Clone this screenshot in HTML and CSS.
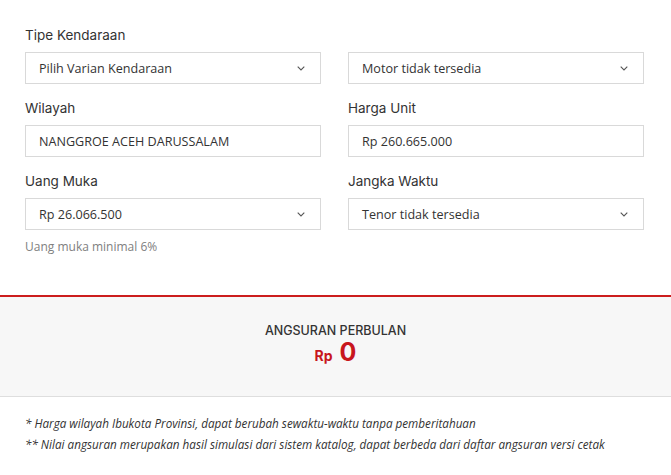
FILE: index.html
```html
<!DOCTYPE html>
<html lang="id">
<head>
<meta charset="utf-8">
<title>Simulasi Kredit</title>
<link rel="stylesheet" href="styles.css">
</head>
<body>
<div class="page">
  <form class="form">
    <div class="field">
      <div class="label">Tipe Kendaraan</div>
      <div class="select"><span>Pilih Varian Kendaraan</span><svg class="chev" width="8" height="5" viewBox="0 0 8 5"><path d="M0.7 0.7 L4 3.9 L7.3 0.7" fill="none" stroke="#555" stroke-width="1.1"/></svg></div>
    </div>
    <div class="field">
      <div class="label">&nbsp;</div>
      <div class="select"><span>Motor tidak tersedia</span><svg class="chev" width="8" height="5" viewBox="0 0 8 5"><path d="M0.7 0.7 L4 3.9 L7.3 0.7" fill="none" stroke="#555" stroke-width="1.1"/></svg></div>
    </div>
    <div class="field">
      <div class="label">Wilayah</div>
      <div class="select"><span>NANGGROE ACEH DARUSSALAM</span></div>
    </div>
    <div class="field">
      <div class="label">Harga Unit</div>
      <div class="select"><span>Rp 260.665.000</span></div>
    </div>
    <div class="field">
      <div class="label">Uang Muka</div>
      <div class="select"><span>Rp 26.066.500</span><svg class="chev" width="8" height="5" viewBox="0 0 8 5"><path d="M0.7 0.7 L4 3.9 L7.3 0.7" fill="none" stroke="#555" stroke-width="1.1"/></svg></div>
      <div class="hint">Uang muka minimal 6%</div>
    </div>
    <div class="field">
      <div class="label">Jangka Waktu</div>
      <div class="select"><span>Tenor tidak tersedia</span><svg class="chev" width="8" height="5" viewBox="0 0 8 5"><path d="M0.7 0.7 L4 3.9 L7.3 0.7" fill="none" stroke="#555" stroke-width="1.1"/></svg></div>
    </div>
  </form>
  <section class="result">
    <div class="result-title">ANGSURAN PERBULAN</div>
    <div class="result-value"><span class="cur">Rp</span><span class="num">0</span></div>
  </section>
  <div class="notes">
    <p>* Harga wilayah Ibukota Provinsi, dapat berubah sewaktu-waktu tanpa pemberitahuan</p>
    <p>** Nilai angsuran merupakan hasil simulasi dari sistem katalog, dapat berbeda dari daftar angsuran versi cetak</p>
  </div>
</div>
</body>
</html>
```
FILE: styles.css
```css
html, body {
  margin: 0;
  padding: 0;
  background: #fff;
}
.page {
  width: 671px;
  font-family: "Open Sans", "Liberation Sans", sans-serif;
  color: #333;
}
.form {
  display: grid;
  grid-template-columns: 296px 296px;
  column-gap: 27px;
  row-gap: 16px;
  padding: 27px 0 0 25px;
  height: 295px;
  box-sizing: border-box;
  align-items: start;
  align-content: start;
}
.field {
  display: flex;
  flex-direction: column;
}
.label {
  font-family: "Inter", "Liberation Sans", sans-serif;
  font-size: 13.5px;
  line-height: 17px;
  height: 17px;
  margin-bottom: 8px;
  color: #333;
}
.select {
  height: 32px;
  box-sizing: border-box;
  border: 1px solid #d9d9d9;
  display: flex;
  align-items: center;
  justify-content: space-between;
  padding: 0 15px 0 13px;
  font-size: 12.6px;
  color: #333;
}
.chev {
  display: block;
}
.hint {
  margin-top: 9px;
  font-size: 12px;
  line-height: 16px;
  color: #808080;
}
.result {
  border-top: 2px solid #cc1d1d;
  border-bottom: 1px solid #dedede;
  background: #f7f7f7;
  height: 102px;
  box-sizing: border-box;
  display: flex;
  flex-direction: column;
  align-items: center;
  padding-top: 26px;
}
.result-title {
  font-family: "Inter", "Liberation Sans", sans-serif;
  font-size: 12.5px;
  font-weight: 500;
  line-height: 16px;
  color: #333;
}
.result-value {
  display: flex;
  align-items: baseline;
  gap: 7px;
  color: #c8161d;
  font-family: "Inter", "Liberation Sans", sans-serif;
  font-weight: 700;
  line-height: 26px;
}
.cur {
  font-size: 14px;
}
.num {
  font-size: 25px;
}
.notes {
  padding: 18px 25px 0;
}
.notes p {
  margin: 0 0 5px;
  font-size: 11.7px;
  font-style: italic;
  line-height: 16px;
  color: #333;
}
```
